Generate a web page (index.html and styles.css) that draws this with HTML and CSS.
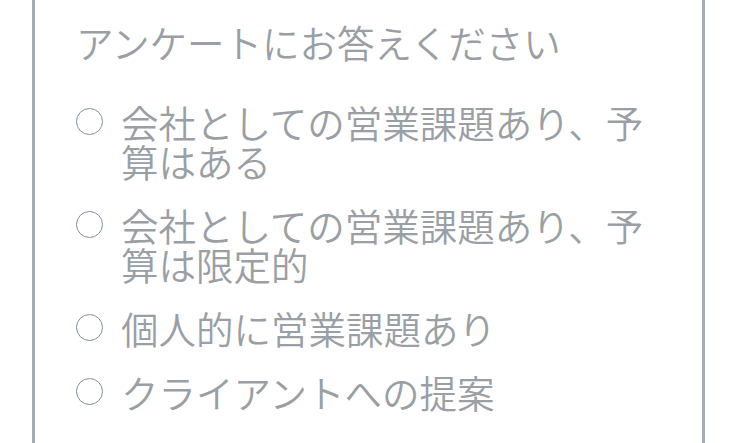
FILE: index.html
```html
<!DOCTYPE html>
<html lang="ja">
<head>
<meta charset="utf-8">
<link rel="stylesheet" href="styles.css">
</head>
<body>
<div class="card">
  <div class="title">アンケートにお答えください</div>
  <ul class="options">
    <li class="option"><span class="radio"></span><span class="label">会社としての営業課題あり、予算はある</span></li>
    <li class="option"><span class="radio"></span><span class="label">会社としての営業課題あり、予算は限定的</span></li>
    <li class="option"><span class="radio"></span><span class="label">個人的に営業課題あり</span></li>
    <li class="option"><span class="radio"></span><span class="label">クライアントへの提案</span></li>
  </ul>
</div>
</body>
</html>
```
FILE: styles.css
```css
html, body {
  margin: 0;
  padding: 0;
  background: #ffffff;
  overflow: hidden;
}
body {
  font-family: "Noto Sans CJK JP", "Noto Sans", sans-serif;
  font-weight: 350;
  color: #999fa5;
}
.card {
  margin-left: 32px;
  width: 586px;
  height: 480px;
  border-left: 3px solid #a4abb2;
  border-right: 3px solid #a4abb2;
  padding: 20px 40px 0 41px;
}
.title {
  font-size: 37.5px;
  line-height: 44px;
}
.options {
  list-style: none;
  margin: 38px 0 0 0;
  padding: 0;
  display: flex;
  flex-direction: column;
  gap: 25px;
}
.option {
  display: flex;
  align-items: flex-start;
  gap: 18px;
  font-size: 37.5px;
  line-height: 39px;
}
.radio {
  flex: none;
  width: 25px;
  height: 25px;
  margin-top: 6px;
  border: 1.5px solid #7b8fa5;
  border-radius: 50%;
}
.label {
  flex: 1;
}
```
